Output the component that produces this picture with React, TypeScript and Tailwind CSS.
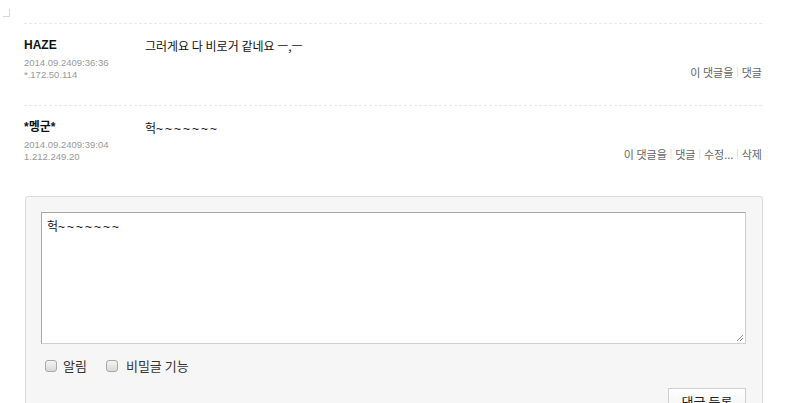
import React from 'react';

const font = "font-['Liberation_Sans','Noto_Sans_CJK_KR',sans-serif]";

const comments = [
  {
    id: 1,
    name: 'HAZE',
    date: '2014.09.2409:36:36',
    ip: '*.172.50.114',
    body: '그러게요 다 비로거 같네요 ㅡ,ㅡ',
    actions: ['이 댓글을', '댓글'],
  },
  {
    id: 2,
    name: '*멩군*',
    date: '2014.09.2409:39:04',
    ip: '1.212.249.20',
    body: '헉~~~~~~~',
    actions: ['이 댓글을', '댓글', '수정...', '삭제'],
  },
];

// tildes in the reference are wide, so space them out a bit
const Body = ({ text }: { text: string }) => {
  const idx = text.indexOf('~');
  if (idx < 0) return <>{text}</>;
  return (
    <>
      {text.slice(0, idx)}
      <span className="font-['Liberation_Sans',sans-serif] tracking-[2px]">{text.slice(idx)}</span>
    </>
  );
};

const FakeCheckbox = () => (
  <span className="inline-block w-[12px] h-[12px] rounded-[3px] border border-[#a8a8a8] bg-gradient-to-b from-[#f4f4f4] to-[#d9d9d9]" />
);

const App = () => {
  return (
    <div className={`w-[788px] h-[403px] overflow-hidden bg-white text-[#222] ${font}`}>
      {/* corner mark */}
      <div className="h-[23px] pl-[3px] pt-[9px]">
        <div className="w-[7px] h-[8px] border-r border-b border-[#d8d8d8]" />
      </div>

      <div className="pl-[24px] pr-[26px]">
        {comments.map((c, i) => (
          <div
            key={c.id}
            className={`border-t border-dashed border-[#e8e8e8] pt-[12px] ${i === 0 ? 'pb-[24px]' : 'pb-[0px]'}`}
          >
            <div className="flex">
              <div className="w-[121px] shrink-0">
                <div className="text-[12px] leading-[18px] font-bold text-[#111]">{c.name}</div>
                <div className="mt-[3px] text-[9.5px] leading-[12px] text-[#999]">{c.date}</div>
                <div className="text-[9.5px] leading-[12px] text-[#999]">{c.ip}</div>
              </div>
              <div className="flex-1 flex flex-col">
                <div className="text-[12px] leading-[20px] text-[#111] font-['Noto_Sans_CJK_KR',sans-serif]">
                  <Body text={c.body} />
                </div>
                <div className="mt-auto mb-[3px] flex justify-end items-center text-[11px] leading-[12px] text-[#666] font-['Noto_Sans_CJK_KR',sans-serif]">
                  {c.actions.map((a, j) => (
                    <React.Fragment key={a}>
                      {j > 0 && <span className="mx-[3px] text-[#d0d0d0] text-[9px]">|</span>}
                      <span>{a}</span>
                    </React.Fragment>
                  ))}
                </div>
              </div>
            </div>
          </div>
        ))}

        {/* write form */}
        <div className="mt-[33px] ml-[1px] -mr-[1px] h-[260px] rounded-[3px] border border-[#dcdcdc] bg-[#f6f6f6] pt-[15px] pl-[15px] pr-[16px]">
          <div className="relative h-[132px] border border-[#cfcfcf] border-t-[#a6a6a6] border-l-[#a6a6a6] bg-white px-[5px] pt-[5px]">
            <div className="text-[12px] leading-[16px] text-[#111] font-['Noto_Sans_CJK_KR',sans-serif]">
              <Body text="헉~~~~~~~" />
            </div>
            <svg className="absolute right-[1px] bottom-[1px]" width="9" height="9" viewBox="0 0 9 9">
              <path d="M8 2 L2 8 M8 5 L5 8" stroke="#8a8a8a" strokeWidth="1" />
            </svg>
          </div>
          <div className="mt-[15px] flex items-center h-[14px] pl-[4px] text-[13px] text-[#333] font-['Noto_Sans_CJK_KR',sans-serif]">
            <FakeCheckbox />
            <span className="ml-[6px]">알림</span>
            <span className="ml-[19px] flex"><FakeCheckbox /></span>
            <span className="ml-[8px]">비밀글 기능</span>
          </div>
          <div className="mt-[15px] flex justify-end">
            <button className="w-[78px] h-[28px] border border-[#cfcfcf] bg-gradient-to-b from-white to-[#f0f0f0] text-[13px] text-[#222] font-['Noto_Sans_CJK_KR',sans-serif] leading-[24px]">
              댓글 등록
            </button>
          </div>
        </div>
      </div>
    </div>
  );
};

export default App;
